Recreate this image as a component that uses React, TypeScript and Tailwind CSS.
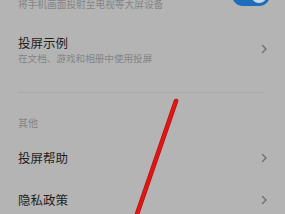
const font = { fontFamily: '"Noto Sans CJK SC", "Noto Sans", sans-serif' }

function Chevron() {
  return (
    <svg width="7" height="10" viewBox="0 0 7 10" className="shrink-0">
      <path d="M1.5 1.5 L5 5 L1.5 8.5" fill="none" stroke="#6e6e6e" strokeWidth="1.4" strokeLinecap="round" strokeLinejoin="round" />
    </svg>
  )
}

function Row({ title, sub, className }: { title: string; sub?: string; className?: string }) {
  return (
    <div className={`flex items-center justify-between pl-[18px] pr-[17px] ${className ?? ''}`}>
      <div className="flex flex-col">
        <span className="text-[12.5px] leading-[18px] text-[#1f1f1f]">{title}</span>
        {sub && <span className="text-[9.6px] leading-[13px] text-[#858585]">{sub}</span>}
      </div>
      <Chevron />
    </div>
  )
}

export default function App() {
  return (
    <div className="relative h-[214px] w-[285px] overflow-hidden bg-[#b4b4b4]" style={font}>
      <div className="-mt-[29px] flex h-[48px] items-center justify-between pl-[18px] pr-[15px]">
        <div className="flex flex-col">
          <span className="text-[12.5px] leading-[18px] text-[#1f1f1f]">无线投屏</span>
          <span className="text-[9.7px] leading-[13px] text-[#858585]">将手机画面投射至电视等大屏设备</span>
        </div>
        <div className="flex h-[22px] w-[38px] items-center justify-end rounded-full bg-[#1f6cbd] pr-[3px]">
          <div className="h-[16px] w-[16px] rounded-full bg-[#c9d6e4]" />
        </div>
      </div>
      <Row title="投屏示例" sub="在文档、游戏和相册中使用投屏" className="mt-[13px] h-[34px]" />
      <div className="mx-[18px] mt-[26px] h-px w-[247px] bg-[#a9a9a9]" />
      <div className="mt-[23px] pl-[18px] text-[10px] leading-[14px] text-[#858585]">其他</div>
      <Row title="投屏帮助" className="mt-[18px] h-[20px]" />
      <Row title="隐私政策" className="mt-[22px] h-[20px]" />
      <svg className="pointer-events-none absolute left-0 top-0" width="285" height="214" viewBox="0 0 285 214">
        <line x1="176" y1="101" x2="135" y2="220" stroke="#b01010" strokeWidth="4.6" strokeLinecap="round" />
        <line x1="176" y1="101" x2="135" y2="220" stroke="#e31414" strokeWidth="3.2" strokeLinecap="round" />
      </svg>
    </div>
  )
}
